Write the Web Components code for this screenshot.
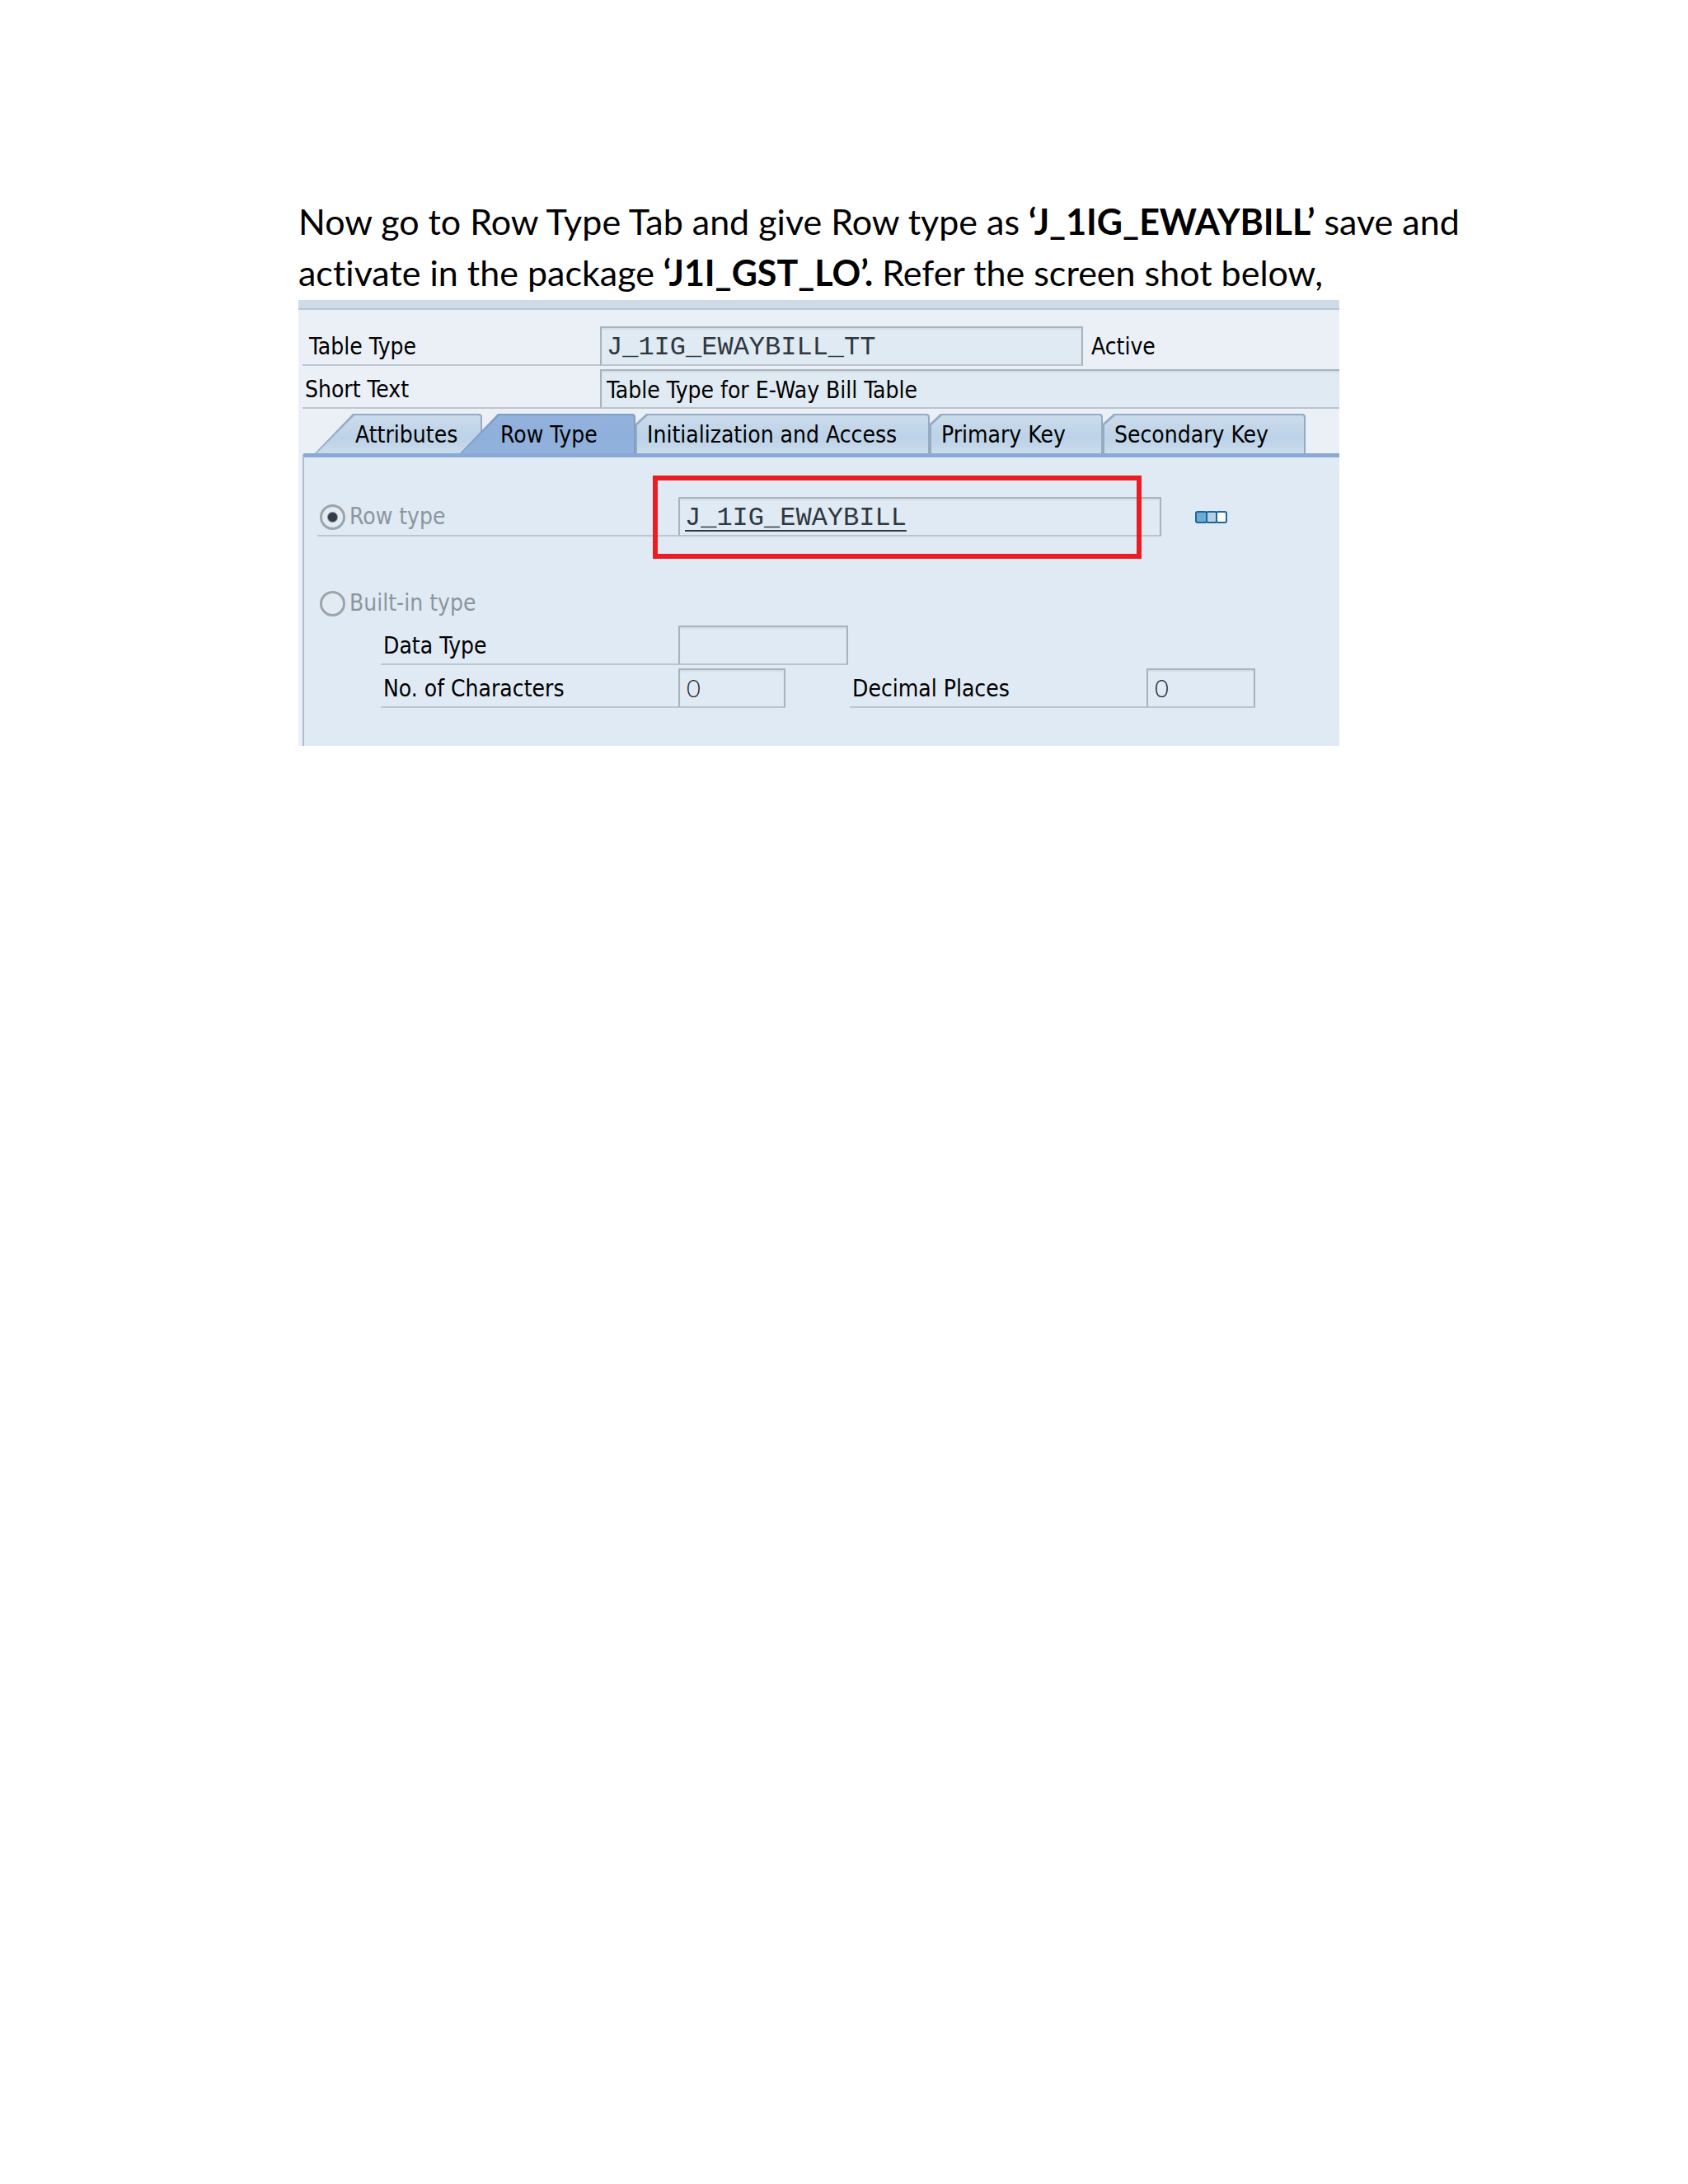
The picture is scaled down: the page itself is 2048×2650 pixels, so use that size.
<!DOCTYPE html>
<html lang="en">
<head>
<meta charset="utf-8">
<title>Row Type Tab</title>
<style>
  html, body { margin: 0; background: #fff; }
</style>
</head>
<body>
<doc-page>
  <doc-paragraph>Now go to Row Type Tab and give Row type as <b>‘J_1IG_EWAYBILL’</b> save and<br>activate in the package <b>‘J1I_GST_LO’.</b> Refer the screen shot below,</doc-paragraph>
  <sap-window>
    <sap-field slot="header" label="Table Type" value="J_1IG_EWAYBILL_TT" mono inset style="--label:361px;--input:586px">
      <span>Active</span>
    </sap-field>
    <sap-field slot="header" label="Short Text" value="Table Type for E-Way Bill Table" grow style="--label:361px"></sap-field>
    <sap-tab slot="tabs" shape="slant" style="--w:203px">Attributes</sap-tab>
    <sap-tab slot="tabs" shape="slant" selected style="--w:213px">Row Type</sap-tab>
    <sap-tab slot="tabs" style="--w:357px">Initialization and Access</sap-tab>
    <sap-tab slot="tabs" style="--w:210px">Primary Key</sap-tab>
    <sap-tab slot="tabs" style="--w:246px">Secondary Key</sap-tab>
    <row-type-form></row-type-form>
  </sap-window>
</doc-page>

<script>
const define = (name, html, setup) => {
  const template = document.createElement('template');
  template.innerHTML = html;
  customElements.define(name, class extends HTMLElement {
    constructor() {
      super();
      this.attachShadow({ mode: 'open' }).append(template.content.cloneNode(true));
    }
    connectedCallback() { if (setup) setup(this, this.shadowRoot); }
  });
};

define('doc-page', `
  <style>
    :host { display: block; min-height: 100vh; box-sizing: border-box; padding: 238px 220px 120px 362px; background: #fff; }
  </style>
  <slot></slot>`);

define('doc-paragraph', `
  <style>
    :host { display: block; font: 43px/62px Lato, sans-serif; font-variant-ligatures: none; color: #000; }
  </style>
  <slot></slot>`);

define('sap-window', `
  <style>
    :host { display: block; max-width: 1263px; margin-top: 2px; background: #ebf0f7; font: 28px/48px "DejaVu Sans Condensed", "DejaVu Sans", sans-serif; color: #000; overflow: hidden; }
    .bar { height: 10px; background: #cfdce8; border-bottom: 2px solid #b6c6d5; }
    header { display: grid; gap: 4px; padding: 20px 0 0 5px; }
    nav { display: flex; margin-top: 6px; padding-left: 20px; }
    main { margin-left: 5px; border-left: 2px solid #a9bdd3; border-top: 5px solid #8aa9d5; border-radius: 3px 0 0 0; background: #e0eaf4; }
  </style>
  <div class="bar"></div>
  <header><slot name="header"></slot></header>
  <nav role="tablist"><slot name="tabs"></slot></nav>
  <main><slot></slot></main>`);

define('sap-tab', `
  <style>
    :host { display: block; flex: 0 0 var(--w); }
    button {
      position: relative; isolation: isolate; display: block; width: 100%; height: 48px; margin: 0; border: 0;
      padding: 4px 0 0 14px; background: none; font: inherit; line-height: 44px; color: #000; text-align: left; white-space: nowrap;
      --edge: #94abc2; --top: #cbdcec; --fill: #bcd2e7;
      --shape: polygon(13px 0, 100% 0, 100% 100%, 0 100%, 0 12px);
    }
    button::before, button::after { content: ""; position: absolute; z-index: -1; inset: 0; clip-path: var(--shape); background: var(--edge); border-radius: 0 4px 0 0; }
    button::after { inset: 2px 2px 0 2px; background: linear-gradient(var(--top), var(--fill) 60%, var(--top)); border-radius: 0 3px 0 0; }
    :host([shape=slant]) button { padding-left: 49px; --shape: polygon(46px 0, 100% 0, 100% 100%, 0 100%); }
    :host([selected]) { margin-left: -27px; }
    :host([selected]) button { --edge: #7f9fca; --top: #92b2dc; --fill: #8fb0dc; }
  </style>
  <button type="button" role="tab"><slot></slot></button>`,
  (host, root) => root.querySelector('button').setAttribute('aria-selected', host.hasAttribute('selected')));

const fieldCss = `
    .field { display: flex; height: 48px; line-height: 50px; }
    .label { box-sizing: border-box; flex: 0 0 var(--label); height: 48px; border-bottom: 2px solid #bcc6d0; padding-left: 3px; white-space: nowrap; }
    input.box {
      box-sizing: border-box; flex: 0 0 var(--input); width: 0; min-width: 0; height: 48px; margin: 0; padding: 2px 6px 0; border: 2px solid #a9b3bd; border-bottom-color: #bac4ce;
      border-radius: 0; outline: 0; background: #e0eaf2; box-shadow: inset 0 2px 2px #d3dce5; font: inherit; line-height: 42px; color: #000;
    }
    input.mono { font: 32px/42px "Liberation Mono", monospace; color: #2f3840; }
`;

define('sap-field', `
  <style>
    :host { display: block; }
    ${fieldCss}
    :host([inset]) .label { padding-left: 8px; }
    :host([grow]) input.box { flex: 1 1 0; border-right: 0; }
    .note { padding-left: 10px; }
  </style>
  <div class="field">
    <label class="label" for="value"></label>
    <input class="box" id="value" type="text" readonly>
    <div class="note"><slot></slot></div>
  </div>`,
  (host, root) => {
    root.querySelector('label').textContent = host.getAttribute('label');
    const input = root.querySelector('input');
    input.value = host.getAttribute('value');
    input.classList.toggle('mono', host.hasAttribute('mono'));
    if (host.hasAttribute('grow')) root.querySelector('.note').remove();
  });

define('row-type-form', `
  <style>
    :host { display: block; padding: 48px 0 46px 16px; }
    form { display: grid; gap: 4px; --label: 361px; --input: 132px; }
    ${fieldCss}
    input.box { background: #e0eaf4; }
    .label.choice { display: flex; align-items: center; gap: 5px; padding-left: 3px; padding-top: 2px; color: #8c959e; }
    .row-type { --label: 438px; --input: 586px; margin-bottom: 52px; }
    .builtin .label { border: 0; }
    .choice input {
      appearance: none; box-sizing: border-box; flex: none; width: 31px; height: 31px; margin: 0; border: 3px solid #9aa5ae; border-radius: 50%;
      background: #e3eaf1;
    }
    .choice input:checked { background: radial-gradient(circle, #343c4c 5px, #e3eaf1 7px); }
    .nested { padding-left: 77px; }
    .marked { position: relative; display: flex; flex: 0 0 var(--input); }
    .marked::after { content: ""; position: absolute; inset: -26px 24px -27px -31px; border: 6px solid #ec1c24; pointer-events: none; }
    .marked .box { text-decoration: underline 2px; text-underline-offset: 6px; text-decoration-skip-ink: none; }
    input.num { font: 300 29px/42px Lato, sans-serif; color: #20262c; padding: 0 8px 2px; }
    .more { align-self: center; display: block; margin: 0 0 0 41px; padding: 0; border: 0; background: none; }
    .more svg { display: block; }
    .wide { --input: 206px; }
    .short { --input: 130px; }
    .decimal { margin-left: 78px; --label: 360px; }
  </style>
  <form>
    <div class="field row-type">
      <label class="label choice"><input type="radio" name="kind" checked disabled>Row type</label>
      <div class="marked"><input class="box mono" type="text" value="J_1IG_EWAYBILL" aria-label="Row type name" readonly></div>
      <button class="more" type="button" aria-label="More">
        <svg width="39" height="15" viewBox="0 0 39 15" stroke="#1b6797" stroke-width="2">
          <rect x="1" y="1" width="13" height="13" rx="2" fill="#6aaed6"/>
          <rect x="14" y="1" width="12" height="13" rx="2" fill="#b5cfe4"/>
          <rect x="26" y="1" width="12" height="13" rx="2" fill="#fff"/>
        </svg>
      </button>
    </div>
    <div class="field builtin">
      <label class="label choice"><input type="radio" name="kind" disabled>Built-in type</label>
    </div>
    <div class="field nested wide">
      <label class="label" for="dtype">Data Type</label><input class="box" id="dtype" type="text" readonly>
    </div>
    <div class="field nested">
      <div class="field short"><label class="label" for="chars">No. of Characters</label><input class="box num" id="chars" type="text" value="0" readonly></div>
      <div class="field decimal"><label class="label" for="places">Decimal Places</label><input class="box num" id="places" type="text" value="0" readonly></div>
    </div>
  </form>`);
</script>
</body>
</html>
